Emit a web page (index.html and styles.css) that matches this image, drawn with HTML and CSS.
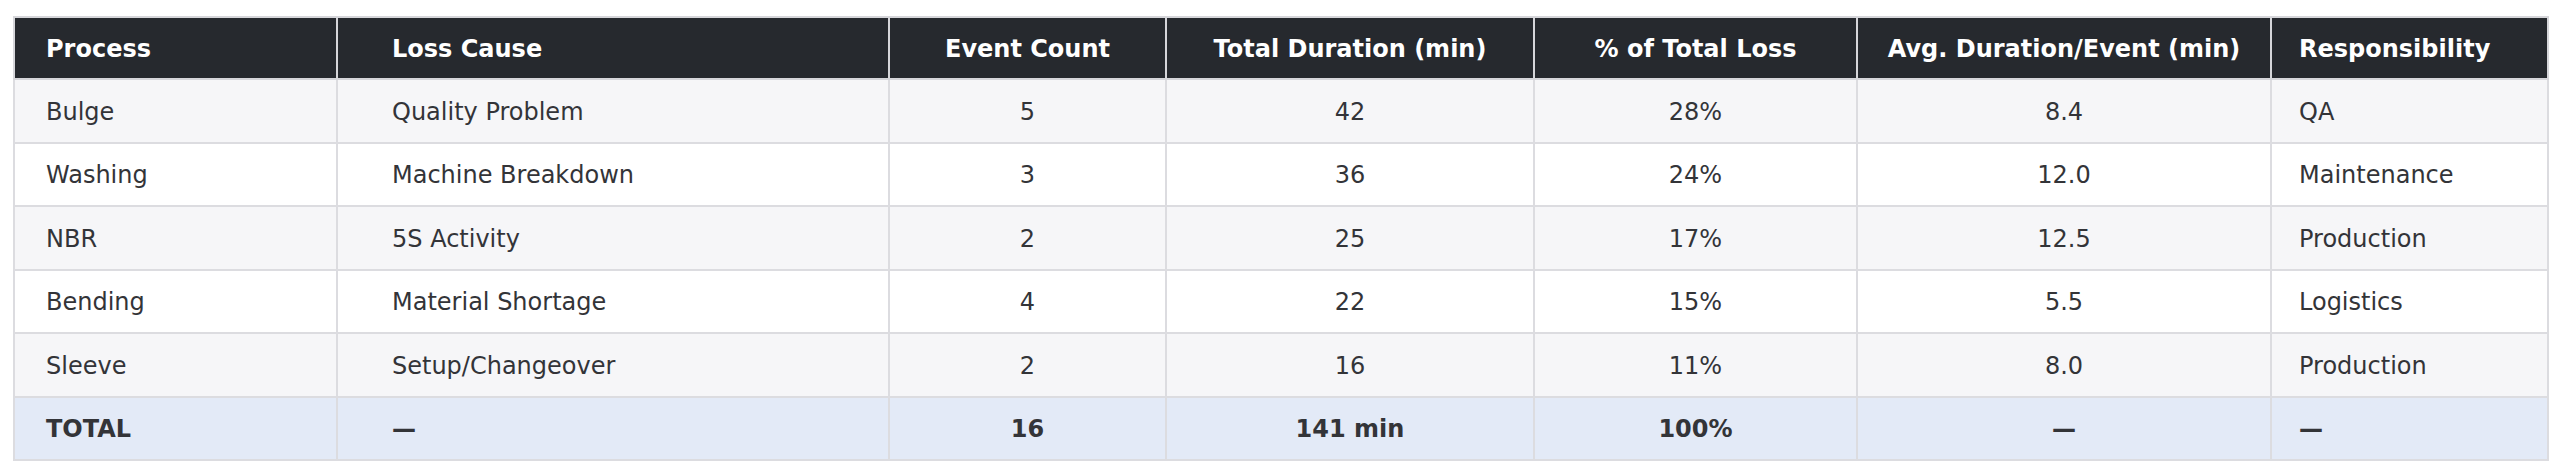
FILE: index.html
```html
<!DOCTYPE html>
<html>
<head>
<meta charset="utf-8">
<link rel="stylesheet" href="styles.css">
</head>
<body>
<div class="wrap">
<table class="loss">
  <colgroup>
    <col class="c1"><col class="c2"><col class="c3"><col class="c4"><col class="c5"><col class="c6"><col class="c7">
  </colgroup>
  <thead>
    <tr>
      <th class="l p1">Process</th>
      <th class="l p2">Loss Cause</th>
      <th>Event Count</th>
      <th>Total Duration (min)</th>
      <th>% of Total Loss</th>
      <th>Avg. Duration/Event (min)</th>
      <th class="l p7">Responsibility</th>
    </tr>
  </thead>
  <tbody>
    <tr class="alt"><td class="l p1">Bulge</td><td class="l p2">Quality Problem</td><td>5</td><td>42</td><td>28%</td><td>8.4</td><td class="l p7">QA</td></tr>
    <tr><td class="l p1">Washing</td><td class="l p2">Machine Breakdown</td><td>3</td><td>36</td><td>24%</td><td>12.0</td><td class="l p7">Maintenance</td></tr>
    <tr class="alt"><td class="l p1">NBR</td><td class="l p2">5S Activity</td><td>2</td><td>25</td><td>17%</td><td>12.5</td><td class="l p7">Production</td></tr>
    <tr><td class="l p1">Bending</td><td class="l p2">Material Shortage</td><td>4</td><td>22</td><td>15%</td><td>5.5</td><td class="l p7">Logistics</td></tr>
    <tr class="alt"><td class="l p1">Sleeve</td><td class="l p2">Setup/Changeover</td><td>2</td><td>16</td><td>11%</td><td>8.0</td><td class="l p7">Production</td></tr>
    <tr class="total"><td class="l p1">TOTAL</td><td class="l p2">—</td><td>16</td><td>141 min</td><td>100%</td><td>—</td><td class="l p7">—</td></tr>
  </tbody>
</table>
</div>
</body>
</html>
```

FILE: styles.css
```css
html, body {
  margin: 0;
  padding: 0;
  background: #ffffff;
}
.wrap {
  padding: 16px 13px 0 13px;
}
.loss {
  width: 100%;
  table-layout: fixed;
  border-collapse: collapse;
  font-family: "DejaVu Sans", sans-serif;
  font-size: 24px;
  color: #333438;
  border: 2px solid #dcdce0;
}
.c1 { width: 323px; }
.c2 { width: 552px; }
.c3 { width: 277px; }
.c4 { width: 368px; }
.c5 { width: 323px; }
.c6 { width: 414px; }
.c7 { width: 277px; }
.loss th, .loss td {
  border: 2px solid #dcdce0;
  text-align: center;
  padding: 0 10px;
  line-height: 28px;
}
.loss th {
  background: #26292e;
  color: #ffffff;
  font-weight: bold;
  height: 62px;
  box-sizing: border-box;
  border-color: #d6d6da;
  padding-top: 2px;
}
.loss td {
  height: 63.5px;
  box-sizing: border-box;
  padding-top: 2px;
}
.loss .l { text-align: left; }
.loss .p1 { padding-left: 31px; }
.loss .p2 { padding-left: 54px; }
.loss .p7 { padding-left: 27px; }
.loss tr.alt td { background: #f6f6f8; }
.loss tr.total td {
  background: #e3eaf7;
  font-weight: bold;
}
```
